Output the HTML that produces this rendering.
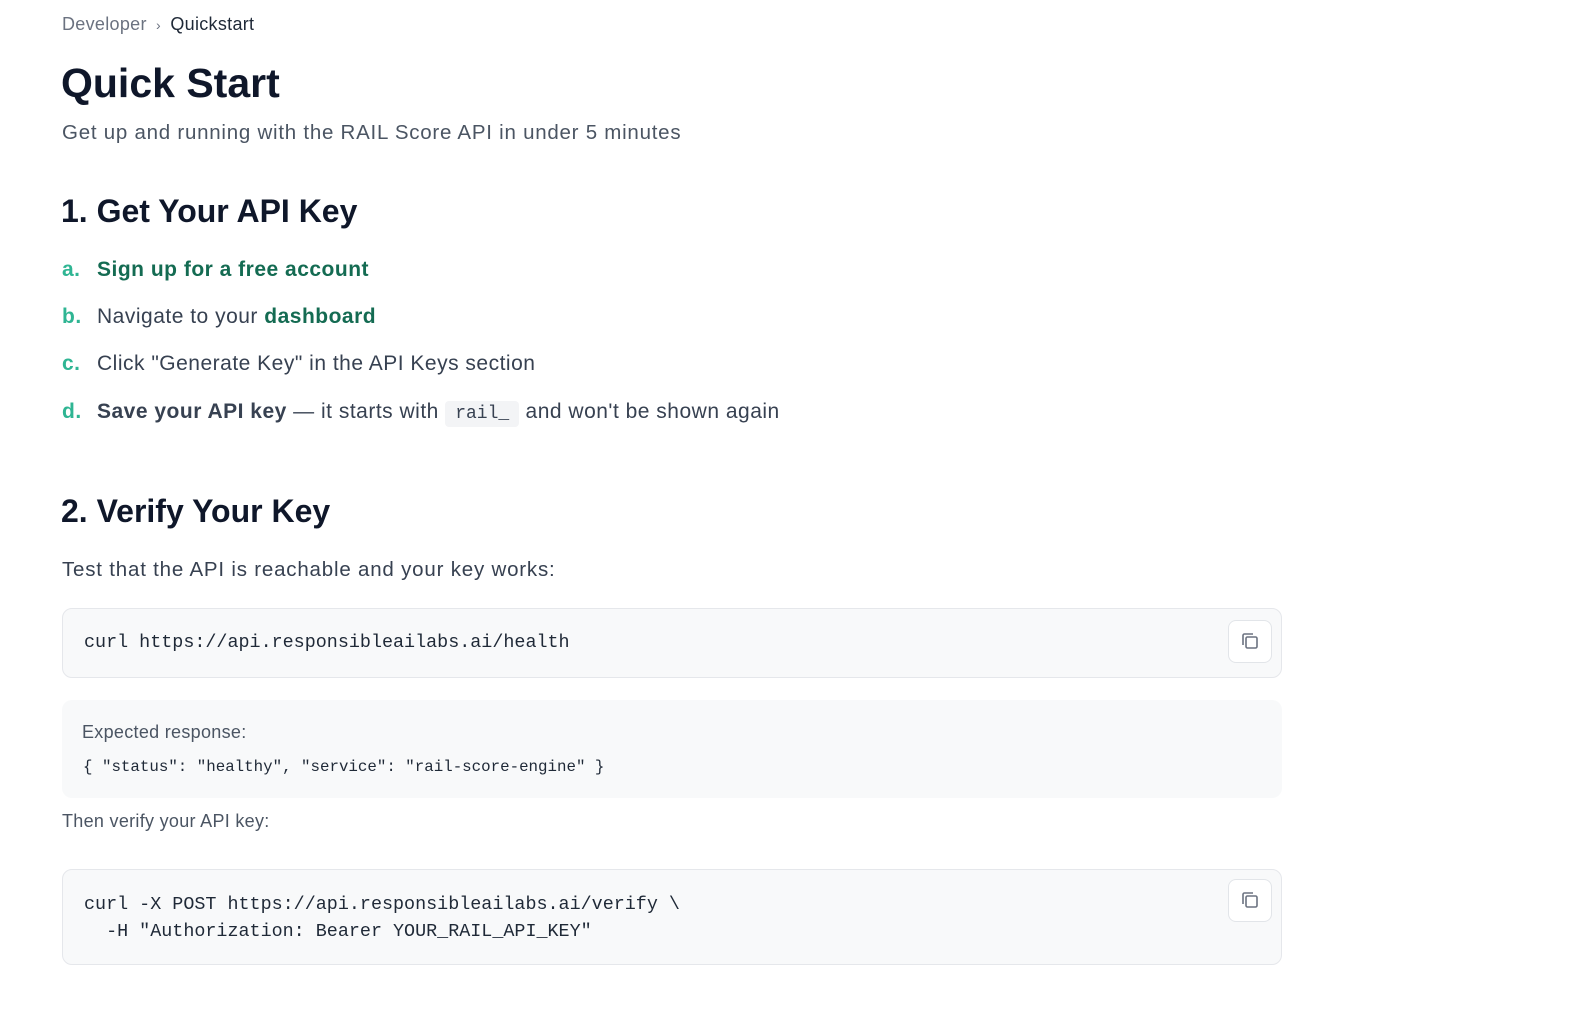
<!DOCTYPE html>
<html><head><meta charset="utf-8"><style>
body{margin:0;background:#fff;font-family:"Liberation Sans",sans-serif;color:#111827;width:1588px;height:1026px;overflow:hidden;position:relative}
.a{position:absolute;white-space:nowrap}
.mono{font-family:"Liberation Mono",monospace;letter-spacing:0}
.box{position:absolute;left:62px;width:1220px;background:#f8f9fa;border-radius:10px}
.bd{border:1px solid #e5e7eb;box-sizing:border-box}
.cp{position:absolute;right:9px;width:44px;height:43px;border:1px solid #e2e5e9;border-radius:8px;background:#fff;box-sizing:border-box}
.li{font-size:21px;color:#374151;letter-spacing:0.5px}
.lt{color:#2fb593;font-weight:bold;display:inline-block;width:35px}
.g{color:#146b52;font-weight:bold}
</style></head><body>
<div class="a" style="left:62px;top:14px;font-size:18px;color:#6b7280;letter-spacing:0.3px">Developer <span style="font-size:14px;margin:0 4px">›</span> <span style="color:#1f2937">Quickstart</span></div>
<div class="a" style="left:61px;top:60px;font-size:41px;font-weight:bold;color:#0f172a">Quick Start</div>
<div class="a" style="left:62px;top:121px;font-size:20.5px;color:#4b5563;letter-spacing:0.75px">Get up and running with the RAIL Score API in under 5 minutes</div>
<div class="a" style="left:61px;top:193px;font-size:32px;font-weight:bold;color:#0f172a">1. Get Your API Key</div>
<div class="a li" style="left:62px;top:258px"><span class="lt">a.</span><span class="g">Sign up for a free account</span></div>
<div class="a li" style="left:62px;top:305px"><span class="lt">b.</span>Navigate to your <span class="g">dashboard</span></div>
<div class="a li" style="left:62px;top:352px"><span class="lt">c.</span>Click "Generate Key" in the API Keys section</div>
<div class="a li" style="left:62px;top:400px"><span class="lt">d.</span><b>Save your API key</b> — it starts with <span class="mono" style="font-size:18px;background:#f3f4f6;border-radius:4px;padding:3px 10px">rail_</span> and won't be shown again</div>
<div class="a" style="left:61px;top:493px;font-size:32px;font-weight:bold;color:#0f172a">2. Verify Your Key</div>
<div class="a" style="left:62px;top:558px;font-size:20.5px;color:#374151;letter-spacing:0.8px">Test that the API is reachable and your key works:</div>
<div class="box bd" style="top:608px;height:70px">
<div class="a mono" style="left:21px;top:23px;font-size:18.4px;color:#1f2937">curl https://api.responsibleailabs.ai/health</div>
<div class="cp" style="top:11px"><svg width="42" height="41" viewBox="0 0 42 41" fill="none" stroke="#6b7280" stroke-width="1.6"><rect x="17" y="16" width="11" height="11" rx="1.5"/><path d="M14 24V14.5a1.5 1.5 0 0 1 1.5-1.5H24"/></svg></div>
</div>
<div class="box" style="top:700px;height:98px">
<div class="a" style="left:20px;top:22px;font-size:18px;color:#4b5563;letter-spacing:0.3px">Expected response:</div>
<div class="a mono" style="left:21px;top:58px;font-size:15.8px;color:#1f2937">{ "status": "healthy", "service": "rail-score-engine" }</div>
</div>
<div class="a" style="left:62px;top:811px;font-size:18px;color:#4b5563;letter-spacing:0.3px">Then verify your API key:</div>
<div class="box bd" style="top:869px;height:96px">
<div class="a mono" style="left:21px;top:21px;font-size:18.4px;line-height:27px;color:#1f2937;white-space:pre">curl -X POST https://api.responsibleailabs.ai/verify \
  -H "Authorization: Bearer YOUR_RAIL_API_KEY"</div>
<div class="cp" style="top:9px"><svg width="42" height="41" viewBox="0 0 42 41" fill="none" stroke="#6b7280" stroke-width="1.6"><rect x="17" y="16" width="11" height="11" rx="1.5"/><path d="M14 24V14.5a1.5 1.5 0 0 1 1.5-1.5H24"/></svg></div>
</div>
</body></html>
